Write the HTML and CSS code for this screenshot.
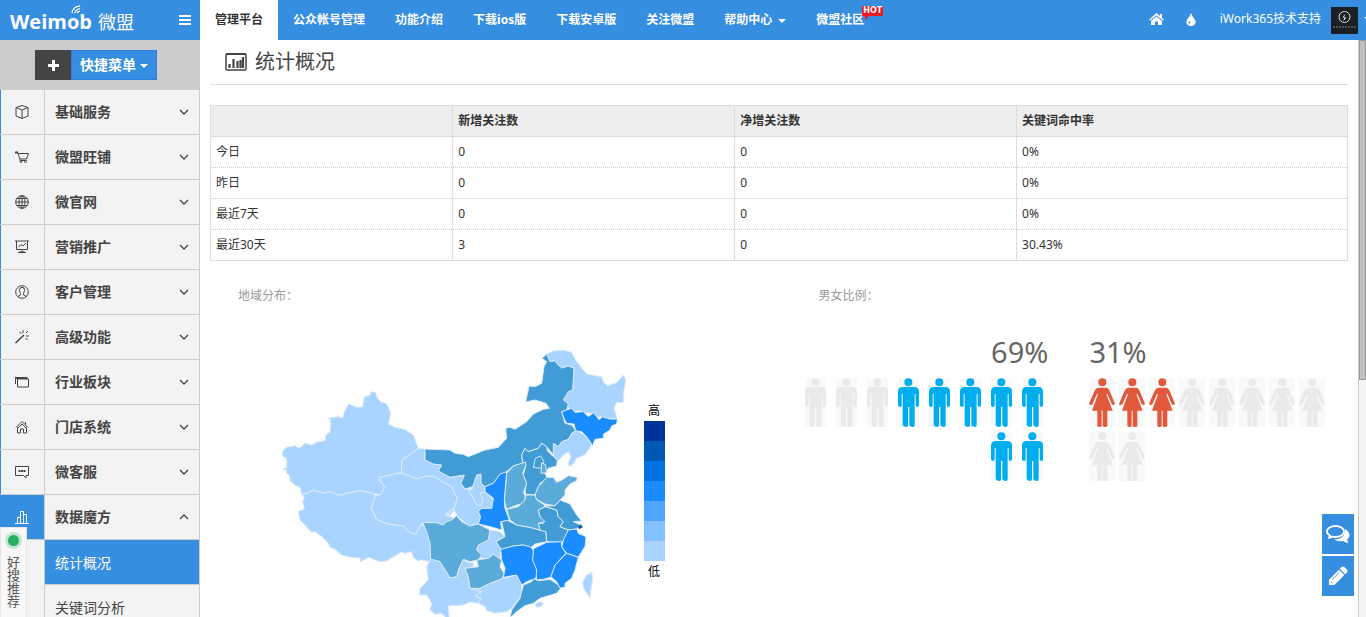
FILE: index.html
```html
<!DOCTYPE html>
<html lang="zh-CN">
<head>
<meta charset="utf-8">
<title>统计概况</title>
<link rel="stylesheet" href="styles.css">
</head>
<body>
<svg class="defs" aria-hidden="true">
  <symbol id="man" viewBox="0 0 63 147">
    <circle cx="31" cy="13" r="12"/>
    <path d="M14 27H49Q63 27 63 41V82Q63 87 58 87T53 82V48H50V142Q50 147 44 147T34 142V87H30V142Q30 147 24 147T14 142V48H11V82Q11 87 6 87T0 82V41Q0 27 14 27Z"/>
  </symbol>
  <symbol id="woman" viewBox="0 0 78 147">
    <circle cx="40" cy="13" r="12"/>
    <path d="M29 29H51Q58 29 62 39L77 75Q78 81 74 81T68 78L55 47L52 49L71 98H55V143Q55 147 48 147T41 143V98H38V143Q38 147 32 147T25 143V98H9L27 49L24 47L11 77Q9 81 4 81T1 75L17 38Q21 29 29 29Z"/>
  </symbol>
  <symbol id="chev" viewBox="0 0 10 6"><path d="M1 1l4 4 4-4" fill="none" stroke="#444" stroke-width="1.300"/></symbol>
</svg>

<header class="topbar">
  <div class="brand">
    <a class="logo" href="#"><span class="logo-en">Weimob</span><span class="logo-cn">微盟</span>
      <svg class="wave" viewBox="0 0 12 10"><path d="M2 9Q3 2 11 1M5 9Q6 5 11 4M8 9Q8 7 11 7" fill="none" stroke="#fff" stroke-width="1.3"/></svg></a>
    <button class="burger" aria-label="菜单"><svg viewBox="0 0 12 10"><path d="M0 1h12M0 5h12M0 9h12" stroke="#fff" stroke-width="2"/></svg></button>
  </div>
  <nav class="nav">
    <a class="on" href="#">管理平台</a>
    <a href="#">公众帐号管理</a>
    <a href="#">功能介绍</a>
    <a href="#">下载ios版</a>
    <a href="#">下载安卓版</a>
    <a href="#">关注微盟</a>
    <a href="#">帮助中心<i class="caret"></i></a>
    <a class="community" href="#">微盟社区<span class="hot">HOT</span></a>
  </nav>
  <div class="tools">
    <a href="#" aria-label="首页"><svg class="ic-home" viewBox="0 0 15 12"><path d="M7.500 0L11 3V1h2v4l2 1.700-1 .9L7.500 2.200 1 7.600 0 6.700Z"/><path d="M7.500 3.300L13 8v4H9V8.500H6V12H2V8Z"/></svg></a>
    <a href="#" aria-label="主题"><svg class="ic-drop" viewBox="0 0 10 13"><path d="M5 0Q6 3 8.500 6Q10 8 9.500 10Q8.500 13 5 13T.5 10Q0 8 1.500 6Q4 3 5 0Z"/><circle cx="3.500" cy="9.500" r="1" fill="#368ee0"/></svg></a>
    <a class="user" href="#">iWork365技术支持<svg class="avatar" viewBox="0 0 27 27"><rect width="27" height="27" fill="#1b1f24"/><circle cx="13.500" cy="10" r="5.500" fill="none" stroke="#ddd"/><path d="M14.500 6.500l-3 4h4l-3 3.500 1-5Z" fill="#eee"/><path d="M2 20h23" stroke="#666" stroke-width="1.500" stroke-dasharray="2 1"/></svg><i class="caret"></i></a>
  </div>
</header>

<div class="body">
  <aside class="side">
    <div class="quick">
      <button class="plus" aria-label="添加"><svg viewBox="0 0 11 11"><path d="M5.500 0v11M0 5.500h11" stroke="#fff" stroke-width="3"/></svg></button><button class="quick-btn">快捷菜单<i class="caret"></i></button>
    </div>
    <ul class="menu">
      <li><a href="#"><span class="ic"><svg viewBox="0 0 14 14"><path d="M7 .5l6 2v8.500l-6 2.500-6-2.500V2.500ZM1 2.500l6 2.500 6-2.500M7 5v8.500"/></svg></span>基础服务<svg class="chev"><use href="#chev"/></svg></a></li>
      <li><a href="#"><span class="ic"><svg viewBox="0 0 14 14"><path d="M0 2.500h3" stroke-width="2"/><path d="M2.500 2.500L5 9h6.500L13.500 3.500H3M5 9v1.500h6.500"/><circle cx="6" cy="11.500" r="1"/><circle cx="10.500" cy="11.500" r="1"/></svg></span>微盟旺铺<svg class="chev"><use href="#chev"/></svg></a></li>
      <li><a href="#"><span class="ic"><svg viewBox="0 0 14 14"><circle cx="7" cy="7" r="6.300"/><ellipse cx="7" cy="7" rx="3" ry="6.300"/><path d="M.5 7h13M7 .5v13M1.500 3.500h11M1.500 10.500h11"/></svg></span>微官网<svg class="chev"><use href="#chev"/></svg></a></li>
      <li><a href="#"><span class="ic"><svg viewBox="0 0 14 14"><path d="M0 1h14M1.500 1v8.500h11V1M3.500 7l2.500-2.500 2 1.500 3-3M4 12.500q3-3 6 0M3 12.500h8"/></svg></span>营销推广<svg class="chev"><use href="#chev"/></svg></a></li>
      <li><a href="#"><span class="ic"><svg viewBox="0 0 14 14"><circle cx="7" cy="7" r="6.300"/><path d="M3 12q0-1.500 2.500-2V8.500Q3.500 5 5 3q2-1.500 4 0 1.500 2-.5 5.500V10q2.500.5 2.500 2"/></svg></span>客户管理<svg class="chev"><use href="#chev"/></svg></a></li>
      <li><a href="#"><span class="ic"><svg viewBox="0 0 14 14"><path d="M.5 13L9 5" stroke-width="1.500"/><path d="M8 0v3M4.500 2l2 1.500M13 1l-2 2M11 6h3M10.500 8l2 2"/></svg></span>高级功能<svg class="chev"><use href="#chev"/></svg></a></li>
      <li><a href="#"><span class="ic"><svg viewBox="0 0 14 14"><path d="M.5 9V2.500h11M2.500 4h11v8h-11Z"/><path d="M.5 3h12" stroke-width="2"/></svg></span>行业板块<svg class="chev"><use href="#chev"/></svg></a></li>
      <li><a href="#"><span class="ic"><svg viewBox="0 0 14 14"><path d="M1 7.500l6-6 6 6M3 8l4-4 4 4M2.500 7.500v5.500h3V9h3v4h3V7.500M10.500 2v2.500"/></svg></span>门店系统<svg class="chev"><use href="#chev"/></svg></a></li>
      <li><a href="#"><span class="ic"><svg viewBox="0 0 14 14"><path d="M.5 1.500h13v9H11V13L8.500 10.500h-8Z"/><path d="M3.500 6h7" stroke-width="2" stroke-dasharray="2 .5"/></svg></span>微客服<svg class="chev"><use href="#chev"/></svg></a></li>
      <li class="open"><a href="#"><span class="ic"><svg viewBox="0 0 14 14"><path d="M0 13.500h14M2.500 13V7.500h3M5.500 13V1.500h3V13M8.500 4.500h3V13"/></svg></span>数据魔方<svg class="chev up"><use href="#chev"/></svg></a>
        <ul class="sub">
          <li><a class="cur" href="#">统计概况</a></li>
          <li><a href="#">关键词分析</a></li>
        </ul>
      </li>
    </ul>
    <a class="haosou" href="#"><i class="dot"></i><span>好搜推荐</span></a>
  </aside>

  <main class="main">
    <h1 class="title"><svg viewBox="0 0 22 18"><rect x="1" y="1" width="20" height="16" rx="1" fill="none" stroke="#444" stroke-width="1.500"/><path d="M1 1h20" stroke="#444" stroke-width="2"/><path d="M4.500 15v-4M8.500 15V6M12.500 15V8M15.500 15V7M18 15V4" stroke="#444" stroke-width="2.200"/></svg>统计概况</h1>
    <table class="stats">
      <thead><tr><th class="c1"></th><th class="c2">新增关注数</th><th class="c2">净增关注数</th><th>关键词命中率</th></tr></thead>
      <tbody>
        <tr><td>今日</td><td>0</td><td>0</td><td>0%</td></tr>
        <tr><td>昨日</td><td>0</td><td>0</td><td>0%</td></tr>
        <tr><td>最近7天</td><td>0</td><td>0</td><td>0%</td></tr>
        <tr><td>最近30天</td><td>3</td><td>0</td><td>30.43%</td></tr>
      </tbody>
    </table>
    <div class="charts">
      <section>
        <h2 class="cap">地域分布：</h2>
        <div class="geo">
          <svg class="map" viewBox="-420 0 1110 834" role="img" aria-label="地域分布">
            <g class="l1" transform="translate(-420 120)">
              <path d="M93 340L92 324 75 315 60 302 58 285 50 280 48 270 37 268 50 262 50 236 37 228 37 215 48 202 77 197 82 203 90 203 105 190 128 194 140 187 165 181 168 165 180 155 182 120 175 113 205 110 218 114 222 98 235 72 262 82 278 80 282 52 300 45 304 35 318 38 320 50 333 67 350 70 362 98 356 132 375 142 404 148 430 165 445 205 420 222 396 240 394 278 330 292 330 304 344 322 332 345 310 340 270 332 205 346 180 334 165 340 128 330 110 342Z"/>
              <path d="M93 340L110 342 128 330 165 340 180 334 205 346 270 332 310 340 316 346 304 385 320 418 355 432 400 438 420 458 437 462 455 432 470 450 480 475 484 545 468 543 455 540 445 543 430 533 425 515 405 520 395 516 350 543 330 545 295 532 272 546 270 534 240 532 215 525 195 508 180 502 175 490 158 472 135 455 125 457 90 420 85 394 103 386 98 365 103 352Z"/>
              <path d="M332 345L344 322 330 304 330 292 394 278 440 296 470 288 495 290 512 302 545 320 562 355 550 395 540 405 525 404 548 412 550 425 538 430 520 442 505 430 455 430 437 462 420 458 400 438 355 432 320 418 304 385 316 346Z"/>
            </g>
            <g class="l1">
              <path d="M25 325L45 327 45 360 70 372 95 375 85 393 120 412 150 408 163 405 155 435 165 447 185 447 188 430 200 405 213 402 213 430 225 440 225 455 250 480 245 505 215 505 205 515 212 530 205 552 180 558 160 545 140 525 130 505 105 524 120 520 135 500 142 475 125 440 92 422 75 410 50 408 20 416-26 398-24 360Z"/>
              <path d="M175 450L188 447 190 430 200 405 213 402 215 430 225 440 225 455 210 460 218 480 215 495 200 495 187 470Z"/>
              <path d="M240 570L270 575 285 590 258 605 272 625 270 660 250 642 235 655 210 655 200 630 205 615 235 600Z"/>
              <path d="M62 657L90 665 120 713 140 710 145 690 160 658 175 668 190 668 190 680 165 685 180 705 175 720 180 745 215 755 195 768 213 775 205 790 180 786 160 795 115 798 118 834 108 834 95 820 75 823 60 810 65 790 50 765 28 765 30 745 55 720 50 680Z"/>
              <path d="M180 745L210 745 240 730 278 715 320 705 335 735 335 760 325 780 305 805 290 815 255 820 230 812 225 800 205 790 213 775 195 768 215 755Z"/>
              <path d="M410 42L430 33 460 30 485 37 500 65 530 102 575 110 580 125 592 137 620 128 640 105 648 120 642 150 640 187 620 187 612 205 622 237 600 235 585 240 570 228 560 238 545 220 520 218 510 212 490 215 475 205 472 195 460 180 475 155 488 150 492 85 475 78 455 84 440 70 435 62 420 65Z"/>
              <path d="M430 310L445 320 455 305 475 298 485 280 500 270 530 290 545 315 525 345 500 355 492 370 478 380 475 370 482 350 475 335 460 345 445 362 428 345Z"/>
              <path d="M530 705L545 697 548 715 540 773 520 745 518 725Z"/>
              <path d="M375 792l15-7 10 5-7 10-14 2Z"/>
            </g>
            <g class="l3">
              <path d="M45 327L120 330 135 340 160 343 175 350 225 330 265 322 290 295 287 265 300 262 315 268 350 245 370 222 400 208 418 205 408 190 375 180 347 186 357 138 375 140 395 130 402 80 410 65 396 55 410 42 420 65 435 62 440 70 455 84 475 78 492 85 488 150 475 155 460 180 475 192 470 210 455 215 465 250 485 255 497 272 485 280 475 298 455 305 445 320 430 310 430 345 410 320 395 310 385 325 355 335 345 325 335 345 338 370 310 378 290 395 270 405 250 430 225 440 213 430 213 402 200 405 188 440 165 447 153 430 163 405 120 412 85 393 95 375 70 372 45 360Z"/>
              <path d="M345 325L355 335 385 325 395 310 410 320 412 332 428 348 442 360 440 378 415 385 405 400 412 415 390 430 375 465 345 462 348 430 340 405 348 375 338 365 335 345Z"/>
              <path d="M275 545L290 540 320 555 360 562 390 570 408 575 410 605 375 612 360 625 340 615 310 618 275 630 258 605 285 590Z"/>
              <path d="M405 500L440 510 445 530 460 545 450 560 475 570 470 590 455 608 410 605 408 575 385 570 385 550 400 550 390 530 385 510Z"/>
              <path d="M440 510L402 498 435 497 450 480 480 492 500 525 515 543 490 545 512 555 500 567 475 570 450 560 460 545 445 530Z"/>
              <path d="M340 735L365 725 370 715 385 722 420 718 445 735 452 745 440 760 390 775 370 790 345 797 320 815 300 834 305 810 330 775Z"/>
            </g>
            <g class="l2">
              <path class="l3" d="M370 382L376 355 392 348 402 365 392 385Z"/>
              <path d="M395 368L407 375 410 398 393 400Z"/>
              <path d="M346 366L348 375 338 400 350 430 340 460 345 465 345 490 320 495 290 508 283 480 290 400 310 378Z"/>
              <path d="M377 460L385 440 410 412 430 412 440 427 460 418 475 407 502 412 500 422 480 432 465 450 465 465 450 480 435 497 405 492 375 475Z"/>
              <path d="M290 508L325 500 345 480 348 465 375 465 380 480 400 492 405 500 385 510 390 530 405 545 385 550 390 570 360 562 320 555 300 540Z"/>
              <path d="M38 548L80 548 100 555 110 545 125 540 140 527 155 545 180 558 205 552 240 570 235 600 205 615 200 630 215 645 205 660 180 665 160 658 145 690 140 710 120 713 90 665 62 657 60 610 50 575Z"/>
              <path d="M165 685L205 680 200 660 235 655 250 643 275 660 270 680 282 700 278 715 240 730 210 745 180 745 175 710Z"/>
            </g>
            <g class="l4">
              <path d="M225 440L250 430 270 402 290 395 283 480 285 505 298 540 272 545 275 570 240 560 205 552 212 530 205 515 215 505 245 505 250 475 225 455Z"/>
              <path d="M455 215L485 205 495 217 520 215 535 230 550 218 568 240 575 230 600 237 622 237 620 252 605 258 600 270 580 283 580 295 555 298 548 317 530 290 515 275 497 272 492 252 470 250 462 235Z"/>
              <path d="M475 570L500 567 505 580 528 590 525 620 518 630 505 652 470 640 455 620 460 600Z"/>
              <path d="M470 640L505 652 495 690 485 715 465 730 465 742 450 744 440 725 422 710 435 675Z"/>
              <path d="M372 625L410 607 455 605 455 620 468 640 435 675 422 712 400 718 380 720 375 690 365 655Z"/>
              <path d="M272 628L310 618 340 615 360 620 370 630 368 660 380 690 378 715 350 725 335 735 320 705 280 712 285 685 275 660Z"/>
            </g>
            <path class="l6" d="M503 560L512 553 519 562 508 568Z"/>
          </svg>
          <div class="legend">
            <span>高</span>
            <i class="k7"></i><i class="k6"></i><i class="k5"></i><i class="k4"></i><i class="k3"></i><i class="k2"></i><i class="k1"></i>
            <span>低</span>
          </div>
        </div>
      </section>
      <section>
        <h2 class="cap">男女比例：</h2>
        <div class="sex">
          <div class="men">
            <p class="pct">69%</p>
            <div class="row">
              <svg class="m"><use href="#man"/></svg><svg class="m"><use href="#man"/></svg><svg class="m"><use href="#man"/></svg><svg class="m"><use href="#man"/></svg><svg class="m"><use href="#man"/></svg><svg class="m off"><use href="#man"/></svg><svg class="m off"><use href="#man"/></svg><svg class="m off"><use href="#man"/></svg><svg class="m"><use href="#man"/></svg><svg class="m"><use href="#man"/></svg>
            </div>
          </div>
          <div class="women">
            <p class="pct">31%</p>
            <div class="row">
              <svg class="w"><use href="#woman"/></svg><svg class="w"><use href="#woman"/></svg><svg class="w"><use href="#woman"/></svg><svg class="w off"><use href="#woman"/></svg><svg class="w off"><use href="#woman"/></svg><svg class="w off"><use href="#woman"/></svg><svg class="w off"><use href="#woman"/></svg><svg class="w off"><use href="#woman"/></svg><svg class="w off"><use href="#woman"/></svg><svg class="w off"><use href="#woman"/></svg>
            </div>
          </div>
        </div>
      </section>
    </div>
  </main>
  <div class="scroll"><i></i></div>
</div>

<div class="float">
  <button aria-label="在线咨询"><svg viewBox="0 0 24 20"><path d="M19 5Q24 8 23.500 12 23 14 21 15.500L22.500 19Q18.500 18.500 17 17 12 18 8 15.500 19 15.500 19 5Z" fill="#fff"/><path d="M9.500 2C14 2 18 4 18 7.500S14 13 9.500 13Q8 13 6.500 12.600 5 13.700 3 13.800L4 11.500Q1 10 1 7.500C1 4 5 2 9.500 2Z" fill="#368ee0" stroke="#fff" stroke-width="1.800"/></svg></button>
  <button aria-label="反馈"><svg viewBox="0 0 22 22"><path d="M1 15L12 4 18 10 7 21H1ZM13 3L15 1Q16.500 0 18 1L21 4Q22 5.500 21 7L19 9Z" fill="#fff"/><path d="M5 14.500L12.500 7M3 17l2 2" stroke="#368ee0"/></svg></button>
</div>
</body>
</html>
```
FILE: styles.css
```css
* { box-sizing: border-box; }
body {
  margin: 0;
  height: 100vh;
  display: flex;
  flex-direction: column;
  overflow: hidden;
  background: #fff;
  color: #333;
  font: 12px/20px "Noto Sans", "Noto Sans CJK SC", sans-serif;
}
a { color: inherit; text-decoration: none; }
button { border: 0; padding: 0; font: inherit; color: inherit; background: none; }
ul { list-style: none; margin: 0; padding: 0; }
h1, h2, p { margin: 0; font-weight: 400; }
.defs { position: absolute; width: 0; height: 0; }
.caret {
  display: inline-block;
  margin-left: 6px;
  vertical-align: middle;
  border: 4px solid transparent;
  border-top-color: #fff;
  border-bottom: 0;
}

.topbar { display: flex; flex: none; height: 40px; background: #368ee0; color: #fff; }
.brand { display: flex; align-items: center; justify-content: space-between; width: 200px; padding: 0 9px 0 10px; }
.logo { position: relative; display: flex; align-items: center; gap: 6px; padding-top: 3px; }
.logo-en { font: 700 20px/30px "Open Sans", sans-serif; }
.logo-cn { font-size: 18px; line-height: 30px; }
.wave { position: absolute; left: 60px; top: 1px; width: 11px; height: 9px; }
.burger { display: flex; }
.burger svg { width: 12px; height: 10px; }
.nav { display: flex; font-weight: 700; line-height: 40px; white-space: nowrap; }
.nav a { padding: 0 15px; }
.nav .on { background: #fff; color: #333; }
.community { position: relative; }
.hot {
  position: absolute;
  left: 61px;
  top: 6px;
  padding: 0 1px;
  border-radius: 1px;
  background: #f01820;
  font: 700 8px/10px "DejaVu Sans", sans-serif;
}
.hot::after {
  content: "";
  position: absolute;
  left: 3px;
  top: 10px;
  border: 4px solid transparent;
  border-width: 4px 4px 0 0;
  border-top-color: #f01820;
}
.tools { display: flex; align-items: center; gap: 22px; margin: 0 -6px 2px auto; fill: #fff; white-space: nowrap; }
.tools a { display: flex; align-items: center; }
.ic-home { width: 15px; height: 12px; }
.ic-drop { width: 10px; height: 13px; margin-right: 2px; }
.avatar { width: 27px; height: 27px; margin-left: 10px; margin-top: 3px; }
.user { font-size: 12px; }
.user .caret { margin-left: 6px; }

.body { display: flex; flex: 1; min-height: 0; }
.side { position: relative; width: 200px; flex: none; overflow: hidden; background: #f3f3f3; border-right: 1px solid #ccc; }
.quick { display: flex; height: 50px; padding: 10px 0 10px 35px; background: #ccc; }
.plus { display: flex; align-items: center; justify-content: center; width: 36px; background: #444; }
.plus svg { width: 11px; height: 11px; }
.quick-btn { width: 86px; border: 1px solid #2f7de0; background: #368ee0; color: #fff; font-weight: 700; font-size: 14px; white-space: nowrap; }
.quick-btn .caret { margin-left: 4px; }
.menu > li > a { display: flex; align-items: center; height: 45px; border-bottom: 1px solid #ccc; font-size: 14px; font-weight: 700; color: #444; }
.ic { display: flex; align-items: center; justify-content: center; width: 45px; height: 44px; margin-right: 10px; padding-right: 2px; border-left: 1px solid #368ee0; border-right: 1px solid #ccc; }
.ic svg { width: 14px; height: 14px; fill: none; stroke: #444; stroke-width: 1; }
.open .ic { background: #368ee0; }
.open .ic svg { stroke: #fff; }
.chev { width: 10px; height: 6px; margin: 0 10px 0 auto; }
.up { transform: rotate(180deg); }
.sub { margin-left: 44px; border-left: 1px solid #ccc; font-size: 14px; }
.sub a { display: block; height: 45px; padding-left: 10px; line-height: 45px; border-bottom: 1px solid #ccc; color: #444; }
.sub .cur { background: #368ee0; color: #fff; }
.haosou {
  position: absolute;
  left: 0;
  bottom: 0;
  display: flex;
  flex-direction: column;
  align-items: center;
  gap: 7px;
  width: 27px;
  height: 90px;
  padding: 4px 6px 0;
  background: #f8f8f8;
  border: 1px solid #e6e6e6;
  border-bottom: 0;
  color: #555;
  font-size: 13px;
  line-height: 13px;
}
.haosou span { width: 13px; }
.dot { flex: none; width: 17px; height: 17px; border: 3px solid #c4e6d0; border-radius: 50%; background: #27ae60; }

.main { flex: 1; min-width: 0; padding: 0 10px; overflow: hidden; }
.title { display: flex; align-items: center; gap: 8px; height: 45px; padding-left: 15px; border-bottom: 1px solid #ddd; color: #444; font-size: 20px; }
.title svg { width: 22px; height: 18px; }
.stats { width: 100%; margin-top: 20px; table-layout: fixed; border-collapse: collapse; border: 1px solid #ddd; }
.stats th, .stats td { height: 31px; padding: 0 5px; text-align: left; border-left: 1px solid #ddd; border-top: 1px dotted #ccc; }
.stats th { background: #eee; border-top: 1px solid #ddd; }
.c1 { width: 21.300%; }
.c2 { width: 24.800%; }
.charts { display: grid; grid-template-columns: 51% 49%; padding-top: 25px; }
.cap { padding-left: 28px; color: #999; font-size: 12px; }
.geo { display: flex; padding: 34px 0 0 60px; }
.map { flex: none; width: 370px; height: 278px; stroke: #dcecfb; stroke-width: 3; stroke-linejoin: round; }
.l1 { fill: #a9d4ff; }
.l2 { fill: #5aaada; }
.l3 { fill: #419bd4; }
.l4 { fill: #1a8cff; }
.l6 { fill: #1c5fa8; stroke: none; }
.legend { padding: 60px 0 0 4px; color: #000; line-height: 21px; }
.legend i { display: block; width: 21px; height: 20px; }
.legend span { display: block; padding-left: 4px; }
.k7 { background: #003399; }
.k6 { background: #005ab3; }
.k5 { background: #0073e0; }
.k4 { background: #1a8cff; }
.k3 { background: #50a6ff; }
.k2 { background: #83c0ff; }
.k1 { background: #a9d4ff; }
.sex { display: flex; gap: 41px; padding: 26px 0 0 10px; }
.pct { color: #666; font-size: 29px; line-height: 40px; }
.row { display: flex; flex-wrap: wrap; padding-top: 6px; row-gap: 5px; }
.men { width: 248px; text-align: right; }
.men .row { flex-direction: row-reverse; column-gap: 10px; padding-right: 5px; margin-left: -5px; }
.women { width: 240px; }
.women .row { column-gap: 4px; }
.m { width: 21px; height: 49px; background: #f9f9f9; fill: #00aeef; }
.w { width: 26px; height: 49px; background: #f9f9f9; fill: #e2583a; }
.m.off, .w.off { fill: #eaeaea; }
.scroll { flex: none; width: 8px; background: #f3f3f3; border-left: 1px solid #ccc; }
.scroll i { display: block; height: 59%; background: #c1c1c1; border: 1px solid #999; }
.float { position: absolute; right: 12px; bottom: 21px; display: flex; flex-direction: column; gap: 2px; }
.float button { display: flex; align-items: center; justify-content: center; width: 32px; height: 40px; background: #368ee0; }
.float svg { width: 24px; height: 20px; }
```
